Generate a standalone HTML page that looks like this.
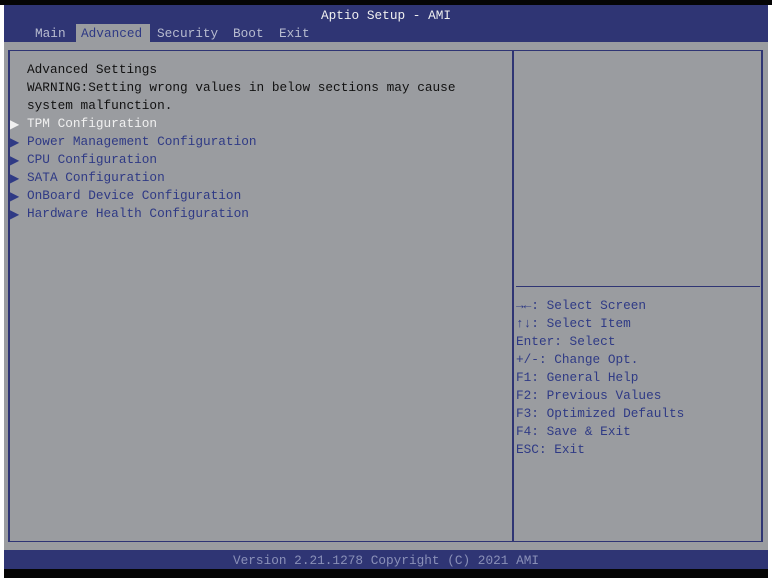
<!DOCTYPE html>
<html><head><style>
body{margin:0;width:772px;height:578px;background:#fff;position:relative;overflow:hidden;font-family:"Liberation Mono",monospace;font-size:12.75px;}
div{position:absolute;}
.t{white-space:pre;line-height:18px;}
.w{color:#f0f0f0}.k{color:#111}.b{color:#2f3a85}
.a{font-family:"DejaVu Sans",sans-serif;font-size:12px}
</style></head><body>
<div style="left:0;top:0;width:772px;height:5px;background:#050505"></div>
<div style="left:4px;top:5px;width:764px;height:37px;background:#2f3574"></div>
<div class="t w" style="left:4px;top:7px;width:764px;text-align:center">Aptio Setup - AMI</div>
<div style="left:76px;top:24px;width:74px;height:18px;background:#9a9ca0"></div>
<div class="t" style="left:35px;top:25px;color:#b8bcd0">Main</div>
<div class="t" style="left:81px;top:25px;color:#2f3a85">Advanced</div>
<div class="t" style="left:157px;top:25px;color:#b8bcd0">Security</div>
<div class="t" style="left:233px;top:25px;color:#b8bcd0">Boot</div>
<div class="t" style="left:279px;top:25px;color:#b8bcd0">Exit</div>
<div style="left:4px;top:42px;width:764px;height:508px;background:#9a9ca0"></div>
<div style="left:8px;top:50px;width:504px;height:490px;border:1px solid #2f3574;border-right:none;border-left-width:2px"></div>
<div style="left:512px;top:50px;width:247px;height:490px;border:1px solid #2f3574;border-right-width:2px;border-left-width:2px"></div>
<div style="left:516px;top:286px;width:244px;height:1px;background:#2f3574"></div>
<div class="t k" style="left:27px;top:61px">Advanced Settings
WARNING:Setting wrong values in below sections may cause
system malfunction.</div>
<div class="t w a" style="left:10px;top:115px">▶</div>
<div class="t w" style="left:27px;top:115px">TPM Configuration</div>
<div class="t b a" style="left:10px;top:133px">▶
▶
▶
▶
▶</div>
<div class="t b" style="left:27px;top:133px">Power Management Configuration
CPU Configuration
SATA Configuration
OnBoard Device Configuration
Hardware Health Configuration</div>
<div class="t b" style="left:516px;top:297px">→←: Select Screen
↑↓: Select Item
Enter: Select
+/-: Change Opt.
F1: General Help
F2: Previous Values
F3: Optimized Defaults
F4: Save &amp; Exit
ESC: Exit</div>
<div style="left:4px;top:550px;width:764px;height:19px;background:#2f3574"></div>
<div class="t" style="left:4px;top:552px;width:764px;text-align:center;color:#8a90b8">Version 2.21.1278 Copyright (C) 2021 AMI</div>
<div style="left:4px;top:569px;width:764px;height:9px;background:#050505"></div>
</body></html>
